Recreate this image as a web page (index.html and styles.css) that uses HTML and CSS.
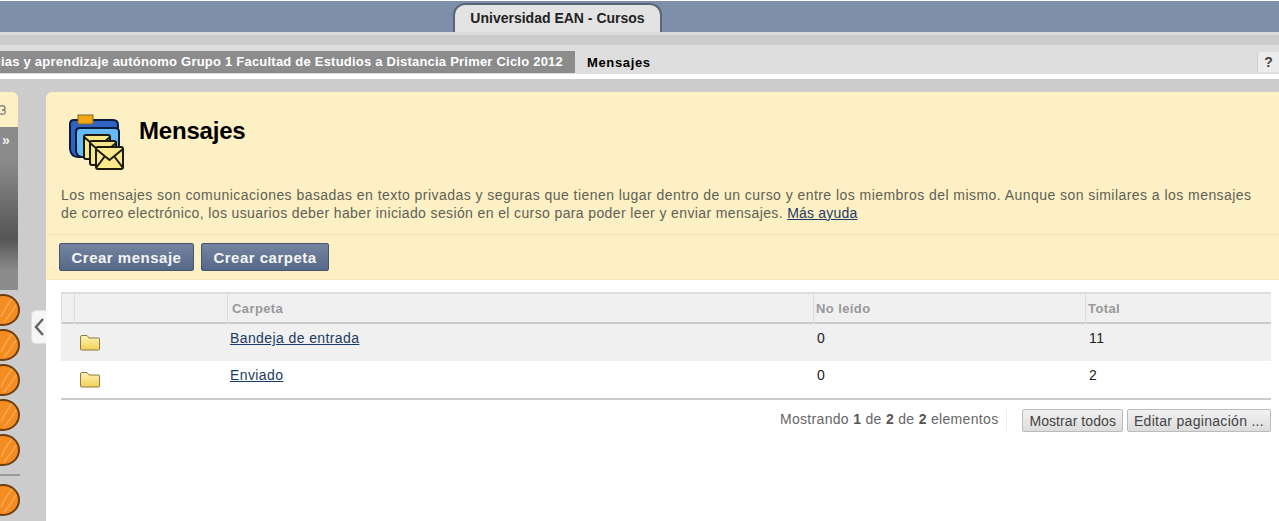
FILE: index.html
```html
<!DOCTYPE html>
<html lang="es">
<head>
<meta charset="utf-8">
<title>Mensajes</title>
<link rel="stylesheet" href="styles.css">
</head>
<body>
<header class="topbar">
  <div class="tab">Universidad EAN - Cursos</div>
</header>
<div class="subbar"></div>
<nav class="crumbs">
  <div class="crumb-course"><span>Estrategias y aprendizaje autónomo Grupo 1 Facultad de Estudios a Distancia Primer Ciclo 2012</span></div>
  <div class="crumb-here">Mensajes</div>
  <div class="help">?</div>
</nav>
<div class="main">
  <aside class="side">
    <div class="side-panel">
      <div class="side-top">
        <svg class="side-glyph" viewBox="0 0 6 12" width="6" height="12"><path d="M0 2 Q5 1 5 4 Q5 6 2 6 Q6 6 5 9 Q4 11 0 10" fill="none" stroke="#888" stroke-width="1.500"/></svg>
      </div>
      <div class="side-dark">»</div>
      <div class="side-grey"></div>
      <div class="side-icons">
        <svg class="ball" viewBox="0 0 20 32"><use href="#ball"/></svg>
        <svg class="ball" viewBox="0 0 20 32"><use href="#ball"/></svg>
        <svg class="ball" viewBox="0 0 20 32"><use href="#ball"/></svg>
        <svg class="ball" viewBox="0 0 20 32"><use href="#ball"/></svg>
        <svg class="ball" viewBox="0 0 20 32"><use href="#ball"/></svg>
        <div class="side-rule"></div>
        <svg class="ball" viewBox="0 0 20 32"><use href="#ball"/></svg>
      </div>
    </div>
  </aside>
  <div class="collapse">
    <svg viewBox="0 0 15 34" width="15" height="34"><path d="M12 9 L5 17 L12 25" fill="none" stroke="#666" stroke-width="2.500"/></svg>
  </div>
  <main class="content">
    <section class="banner">
      <div class="title-row">
        <svg class="title-icon" viewBox="0 0 56 58" width="56" height="58">
          <path d="M1 11 Q1 7 5 7 H44 Q49 7 49 12 V44 H9 Q2 44 1 36 Z" fill="#2f62c4" stroke="#0b1c3a" stroke-width="2"/>
          <rect x="9" y="2" width="15" height="9" fill="#f4a50f" stroke="#7a6a2a"/>
          <path d="M7 19 Q7 15 11 15 H46 Q50 15 50 19 V44 H13 Q8 44 7 38 Z" fill="#66baf5" stroke="#0b1c3a" stroke-width="2"/>
          <g stroke="#1b1a0c" stroke-width="2" stroke-linejoin="round">
            <rect x="15" y="22" width="26" height="24" rx="2" fill="#f7e58a"/>
            <path d="M15 24 L28 35 L41 24" fill="none"/>
            <rect x="21" y="28" width="26" height="24" rx="2" fill="#f7e58a"/>
            <path d="M21 30 L34 41 L47 30" fill="none"/>
            <rect x="27" y="34" width="27" height="22" rx="2" fill="#fbe98c"/>
            <path d="M27 36 L40.500 47 L54 36 M27 55 L36 43 M54 55 L45 43" fill="none"/>
          </g>
        </svg>
        <h1>Mensajes</h1>
      </div>
      <p class="intro">Los mensajes son comunicaciones basadas en texto privadas y seguras que tienen lugar dentro de un curso y entre los miembros del mismo. Aunque son similares a los mensajes <span class="intro-tail">de correo electrónico, los usuarios deber haber iniciado sesión en el curso para poder leer y enviar mensajes. <a href="#">Más ayuda</a></span></p>
      <div class="actions">
        <button class="act">Crear mensaje</button>
        <button class="act">Crear carpeta</button>
      </div>
    </section>
    <section class="list">
      <div class="row head">
        <div class="c0"></div><div class="c1"></div>
        <div class="c2">Carpeta</div><div class="c3">No leído</div><div class="c4">Total</div>
      </div>
      <div class="row odd">
        <div class="c0"></div>
        <div class="c1"><svg class="folder" viewBox="0 0 22 17" width="22" height="17"><use href="#folder"/></svg></div>
        <div class="c2"><a href="#">Bandeja de entrada</a></div><div class="c3">0</div><div class="c4">11</div>
      </div>
      <div class="row even">
        <div class="c0"></div>
        <div class="c1"><svg class="folder" viewBox="0 0 22 17" width="22" height="17"><use href="#folder"/></svg></div>
        <div class="c2"><a href="#">Enviado</a></div><div class="c3">0</div><div class="c4">2</div>
      </div>
      <div class="pager">
        <span class="count">Mostrando <b>1</b> de <b>2</b> de <b>2</b> elementos</span>
        <button class="pg first">Mostrar todos</button>
        <button class="pg last">Editar paginación ...</button>
      </div>
    </section>
  </main>
</div>
<svg class="defs" width="0" height="0">
  <defs>
    <linearGradient id="fg" x1="0" y1="0" x2="0" y2="1"><stop offset="0" stop-color="#fdf3b8"/><stop offset="1" stop-color="#f4cf55"/></linearGradient>
    <symbol id="folder" viewBox="0 0 22 17">
      <path d="M1.500 3 Q1.500 1.500 3 1.500 H8 L10 4 H20 Q20.500 4 20.500 5 V15 Q20.500 16 19.500 16 H2.500 Q1.500 16 1.500 15 Z" fill="url(#fg)" stroke="#8f7a45"/>
    </symbol>
    <symbol id="ball" viewBox="0 0 20 32">
      <ellipse cx="3" cy="16" rx="16" ry="15" fill="#f58c1f" stroke="#6d3d10" stroke-width="2"/>
      <path d="M1 23 Q6 12 12 5 M4 28 Q11 20 16 11" fill="none" stroke="#f8a85a" stroke-width="1.500"/>
    </symbol>
  </defs>
</svg>
</body>
</html>
```
FILE: styles.css
```css
* { box-sizing: border-box; }
html, body { margin: 0; padding: 0; }
body { width: 1279px; height: 521px; overflow: hidden; background: #fff; font-family: "Liberation Sans", Arial, sans-serif; color: #222; }
.topbar { height: 31px; margin-top: 1px; background: #7d8fa9; padding-left: 453px; display: flex; align-items: flex-end; }
.tab { width: 209px; height: 29px; background: #e3e3e3; border: 2px solid #5a6678; border-bottom: 0; border-radius: 12px 12px 0 0; text-align: center; font-size: 14px; font-weight: bold; line-height: 27px; color: #222; }
.subbar { height: 13px; background: #cbcccb; border-top: 3px solid #dcdcdc; }
.crumbs { height: 29px; background: #dedede; display: flex; align-items: center; position: relative; }
.crumb-course { width: 575px; height: 22px; margin-top: 5px; background: #8c8c8c; color: #fff; font-size: 13px; font-weight: bold; line-height: 22px; overflow: hidden; display: flex; justify-content: flex-end; padding-right: 12px; white-space: nowrap; letter-spacing: .22px; }
.crumb-here { margin-left: 12px; margin-top: 5px; font-size: 13px; font-weight: bold; color: #000; letter-spacing: .65px; }
.help { position: absolute; right: 0; top: 7px; width: 22px; height: 20px; background: #ececec; border-left: 1px solid #ccc; color: #444; font-size: 14px; font-weight: bold; text-align: center; line-height: 21px; }
.main { display: flex; height: 447px; border-top: 5px solid #fff; position: relative; }
.side { width: 46px; background: #cbcccb; padding-top: 13px; flex: none; }
.side-panel { width: 18px; display: flex; flex-direction: column; }
.side-top { height: 35px; background: #fdf0c4; border-radius: 0 6px 0 0; padding-top: 12px; }
.side-glyph { display: block; }
.side-dark { height: 34px; background: #8b8b8b; color: #eee; font-size: 14px; font-weight: bold; line-height: 26px; padding-left: 2px; }
.side-grey { height: 129px; background: linear-gradient(#8b8b8b, #555 60%, #8c8c8c 85%); }
.side-icons { margin-top: 4px; display: flex; flex-direction: column; gap: 3px; }
.ball { width: 20px; height: 32px; display: block; }
.side-rule { height: 2px; margin: 5px 0 5px 0; background: #999; width: 20px; }
.collapse { position: absolute; left: 31px; top: 231px; width: 15px; height: 34px; background: #f6f6f6; border: 1px solid #ddd; border-right: 0; border-radius: 5px 0 0 5px; overflow: hidden; }
.collapse svg { display: block; margin: -1px; }
.content { flex: 1; background: #cbcccb; display: flex; flex-direction: column; padding-top: 13px; }
.banner { background: #fdf0c4; border-radius: 6px 0 0 0; height: 188px; display: flex; flex-direction: column; border-bottom: 1px solid #f0e6c0; }
.title-row { display: flex; align-items: flex-start; height: 90px; padding: 21px 0 0 23px; }
.title-icon { flex: none; }
h1 { margin: 4px 0 0 14px; font-size: 24px; line-height: 28px; font-weight: bold; color: #000; letter-spacing: -.2px; }
.intro { margin: 0; padding: 5px 15px 0; height: 54px; font-size: 14px; line-height: 18px; letter-spacing: .45px; color: #5f5f57; }
.intro-tail { letter-spacing: .38px; }
.intro-tail a { letter-spacing: .2px; }
.intro a, .c2 a { color: #1b3b66; }
.actions { border-top: 1px solid #efe5bf; padding: 8px 13px; display: flex; gap: 7px; }
.act { height: 28px; padding: 0 11.5px; border: 1px solid #46566f; border-radius: 2px; background: linear-gradient(#7484a0, #566888); color: #f4f4f4; font: bold 15px "Liberation Sans", Arial, sans-serif; letter-spacing: .5px; }
.list { background: #fff; flex: 1; padding: 12px 8px 0 15px; }
.row { display: grid; grid-template-columns: 13px 153px 586px 272px 184px; font-size: 14px; letter-spacing: .4px; }
.row > div { padding-left: 3px; }
.row > .c3, .row > .c4 { padding-left: 4px; }
.head { height: 32px; background: #f0f0f0; border-top: 2px solid #ddd; border-bottom: 2px solid #ccc; color: #999; font-size: 13px; font-weight: bold; line-height: 30px; letter-spacing: .4px; }
.head > div { border-left: 1px solid #ddd; padding-left: 4px; }
.head > .c3, .head > .c4 { padding-left: 2px; }
.odd, .even { height: 37px; line-height: 29px; }
.odd { background: #f0f0f0; }
.even { background: #fff; border-bottom: 2px solid #ccc; height: 39px; }
.folder { display: block; margin: 10px 0 0 2px; }
.pager { display: flex; justify-content: flex-end; align-items: flex-start; padding-top: 9px; }
.count { font-size: 14px; color: #666; letter-spacing: .32px; padding: 2px 8px 0 0; height: 22px; border-right: 1px solid #eee; margin-right: 15px; }
.count b { color: #555; }
.pg { height: 23px; padding: 0 6px; background: linear-gradient(#f2f2f2, #dcdcdc); border: 1px solid #bbb; border-radius: 2px; font: 14px "Liberation Sans", Arial, sans-serif; color: #444; }
.first { margin-right: 4px; letter-spacing: .07px; }
.last { letter-spacing: .3px; }
.defs { position: absolute; }
```
